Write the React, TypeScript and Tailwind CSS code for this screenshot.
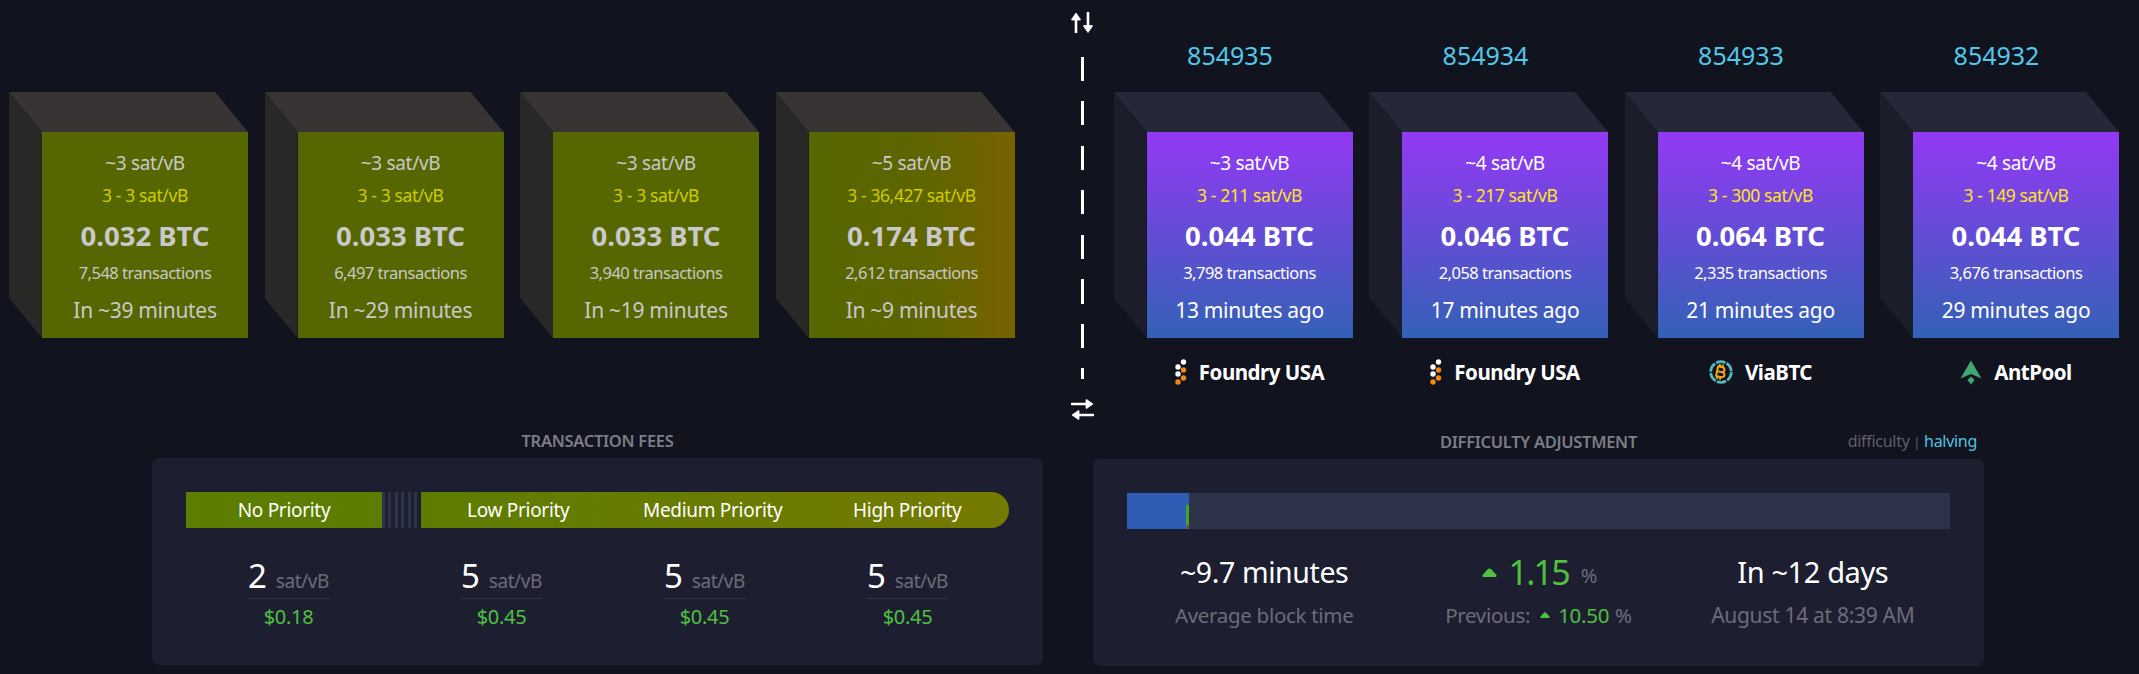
import { FaBitcoinSign } from 'react-icons/fa6';

type BlockData = {
    fee: string;
    range: string;
    btc: string;
    txs: string;
    time: string;
};

const pending: BlockData[] = [
    { fee: '~3 sat/vB', range: '3 - 3 sat/vB', btc: '0.032 BTC', txs: '7,548 transactions', time: 'In ~39 minutes' },
    { fee: '~3 sat/vB', range: '3 - 3 sat/vB', btc: '0.033 BTC', txs: '6,497 transactions', time: 'In ~29 minutes' },
    { fee: '~3 sat/vB', range: '3 - 3 sat/vB', btc: '0.033 BTC', txs: '3,940 transactions', time: 'In ~19 minutes' },
    { fee: '~5 sat/vB', range: '3 - 36,427 sat/vB', btc: '0.174 BTC', txs: '2,612 transactions', time: 'In ~9 minutes' },
];

const mined: (BlockData & { height: string; miner: 'foundry' | 'via' | 'ant' })[] = [
    { height: '854935', miner: 'foundry', fee: '~3 sat/vB', range: '3 - 211 sat/vB', btc: '0.044 BTC', txs: '3,798 transactions', time: '13 minutes ago' },
    { height: '854934', miner: 'foundry', fee: '~4 sat/vB', range: '3 - 217 sat/vB', btc: '0.046 BTC', txs: '2,058 transactions', time: '17 minutes ago' },
    { height: '854933', miner: 'via', fee: '~4 sat/vB', range: '3 - 300 sat/vB', btc: '0.064 BTC', txs: '2,335 transactions', time: '21 minutes ago' },
    { height: '854932', miner: 'ant', fee: '~4 sat/vB', range: '3 - 149 sat/vB', btc: '0.044 BTC', txs: '3,676 transactions', time: '29 minutes ago' },
];

function Cube({ data, front, top, side, text, yellow }: { data: BlockData; front: string; top: string; side: string; text: string; yellow: string }) {
    return (
        <div className="relative w-[239px] h-[246px] shrink-0">
            <div className={`absolute inset-0 [clip-path:polygon(0_0,206px_0,239px_40px,33px_40px)] ${top}`} />
            <div className={`absolute inset-0 [clip-path:polygon(0_0,33px_40px,33px_246px,0_206px)] ${side}`} />
            <div className={`absolute left-[33px] top-[40px] w-[206px] h-[206px] flex flex-col items-center whitespace-nowrap ${front} ${text}`}>
                <div className="mt-[19px] text-[19px] leading-[24px] tracking-[-0.3px]">{data.fee}</div>
                <div className={`mt-[8px] text-[17.5px] leading-[24px] tracking-[-0.4px] ${yellow}`}>{data.range}</div>
                <div className="mt-[13px] text-[27.5px] leading-[32px] font-bold">{data.btc}</div>
                <div className="mt-[9px] text-[16.5px] leading-[24px] tracking-[-0.5px]">{data.txs}</div>
                <div className="mt-[11px] text-[21px] leading-[28px] tracking-[-0.3px]">{data.time}</div>
            </div>
        </div>
    );
}

function FoundryIcon() {
    return (
        <svg width="12" height="26" viewBox="0 0 12 26" className="shrink-0">
            <circle cx="8.5" cy="3" r="2.7" fill="#fff" />
            <circle cx="3" cy="8" r="2.7" fill="#fff" />
            <circle cx="8.5" cy="11" r="2.7" fill="#f7860e" />
            <circle cx="3" cy="15" r="2.7" fill="#fff" />
            <circle cx="8.5" cy="19" r="2.7" fill="#f7860e" />
            <circle cx="3" cy="23" r="2.7" fill="#f7860e" />
        </svg>
    );
}

function ViaIcon() {
    return (
        <div className="grid place-items-center w-[24px] h-[24px] shrink-0">
            <svg width="24" height="24" viewBox="0 0 24 24" className="[grid-area:1/1]">
                <circle cx="12" cy="12" r="10.3" fill="none" stroke="#4fb9bd" strokeWidth="2.8" strokeDasharray="9.5 1.3" />
            </svg>
            <FaBitcoinSign className="[grid-area:1/1] text-[#f3a712] w-[16px] h-[16px] rotate-[12deg]" />
        </div>
    );
}

function AntIcon() {
    return (
        <svg width="22" height="25" viewBox="0 0 22 25" className="shrink-0">
            <path d="M11 0.5 L21.5 18.5 L11 14 L0.5 18.5 Z" fill="#3fa873" />
            <path d="M11 16.5 L14.5 20 L11 24.5 L7.5 20 Z" fill="#3fa873" />
        </svg>
    );
}

function Miner({ kind }: { kind: 'foundry' | 'via' | 'ant' }) {
    const label = kind === 'foundry' ? 'Foundry USA' : kind === 'via' ? 'ViaBTC' : 'AntPool';
    return (
        <div className="ml-[33px] w-[206px] mt-[22px] h-[24px] flex items-center justify-center gap-[12px] text-[20.5px] font-bold text-white tracking-[-0.5px] whitespace-nowrap">
            {kind === 'foundry' && <FoundryIcon />}
            {kind === 'via' && <ViaIcon />}
            {kind === 'ant' && <AntIcon />}
            <span>{label}</span>
        </div>
    );
}

function FeeValue({ value, usd, className }: { value: string; usd: string; className?: string }) {
    return (
        <div className={`w-[81px] flex flex-col items-stretch ${className || ''}`}>
            <div className="flex items-baseline justify-between border-b border-[#33344a] h-[43px] whitespace-nowrap">
                <span className="text-[33px] leading-[40px] text-white">{value}</span>
                <span className="text-[19px] text-[#6c6c78] tracking-[-0.4px]">sat/vB</span>
            </div>
            <div className="text-center text-[20px] leading-[36px] text-[#4fc13f] tracking-[-0.3px]">{usd}</div>
        </div>
    );
}

function Triangle({ w, h }: { w: number; h: number }) {
    return (
        <svg width={w} height={h} viewBox="0 0 15 9" className="shrink-0">
            <path d="M7.5 0.5 Q8.5 0.5 9.5 1.5 L14.5 7 Q15 9 13.5 9 L1.5 9 Q0 9 0.5 7 L5.5 1.5 Q6.5 0.5 7.5 0.5 Z" fill="#4fc13f" />
        </svg>
    );
}

export default function App() {
    return (
        <div className="w-full h-[674px] overflow-hidden bg-[#11131f] font-['Noto_Sans',sans-serif]">
            <div className="flex h-[430px]">
                <div className="flex gap-[16.5px] pl-[9px] pt-[92px]">
                    {pending.map((b, i) => (
                        <Cube
                            key={i}
                            data={b}
                            top="bg-[#383434]"
                            side="bg-[#292826]"
                            text="text-[#c9c9c9]"
                            yellow="text-[#cfcc00]"
                            front={i === 3
                                ? 'bg-[linear-gradient(to_right,#566600_0%,#5f6500_55%,#6b6400_80%,#756200_92%,#756200_100%)]'
                                : 'bg-[#566600]'}
                        />
                    ))}
                </div>

                <div className="ml-[56px] mr-[20px] w-[23px] shrink-0 flex flex-col items-center pt-[12px]">
                    <svg width="23" height="21" viewBox="0 0 23 21" className="shrink-0">
                        <path d="M5 21 V6" stroke="#fff" strokeWidth="2.6" strokeLinecap="round" />
                        <path d="M5 1 L9.5 7.5 Q9.5 8 9 8 L1 8 Q0.5 8 0.5 7.5 Z" fill="#fff" stroke="#fff" strokeWidth="0.8" strokeLinejoin="round" />
                        <path d="M17 0 V15" stroke="#fff" strokeWidth="2.6" strokeLinecap="round" />
                        <path d="M17 20.5 L12.5 14 Q12.5 13.5 13 13.5 L21 13.5 Q21.5 13.5 21.5 14 Z" fill="#fff" stroke="#fff" strokeWidth="0.8" strokeLinejoin="round" />
                    </svg>
                    <div className="mt-[24px] w-[3px] h-[322px] shrink-0 bg-[repeating-linear-gradient(to_bottom,#fff_0,#fff_24px,transparent_24px,transparent_44.5px)]" />
                    <svg width="23" height="21" viewBox="0 0 23 21" className="mt-[20px] shrink-0">
                        <path d="M1 5 H17" stroke="#fff" strokeWidth="2.6" strokeLinecap="round" />
                        <path d="M22 5 L15.5 0.5 Q15 0.5 15 1 L15 9 Q15 9.5 15.5 9.5 Z" fill="#fff" stroke="#fff" strokeWidth="0.8" strokeLinejoin="round" />
                        <path d="M22 16 H6" stroke="#fff" strokeWidth="2.6" strokeLinecap="round" />
                        <path d="M1 16 L7.5 11.5 Q8 11.5 8 12 L8 20 Q8 20.5 7.5 20.5 Z" fill="#fff" stroke="#fff" strokeWidth="0.8" strokeLinejoin="round" />
                    </svg>
                </div>

                <div className="flex gap-[16.5px]">
                    {mined.map((b) => (
                        <div key={b.height} className="w-[239px] shrink-0">
                            <div className="h-[92px] pt-[40px] pr-[6px] text-center text-[25px] leading-[30px] text-[#53c8e8]">{b.height}</div>
                            <Cube
                                data={b}
                                top="bg-[#252837]"
                                side="bg-[#1b1d2a]"
                                text="text-white"
                                yellow="text-[#ffe61e]"
                                front="bg-[linear-gradient(to_bottom,#9339f4,#3361b6)]"
                            />
                            <Miner kind={b.miner} />
                        </div>
                    ))}
                </div>
            </div>

            <div className="flex gap-[50px] pl-[152px]">
                <section className="w-[891px]">
                    <h2 className="mb-[6px] text-center text-[16.5px] leading-[22px] font-semibold text-[#7d7d87] tracking-[-0.3px]">TRANSACTION FEES</h2>
                    <div className="h-[207px] rounded-[7px] bg-[#1d1f31] px-[34px] pt-[34px]">
                        <div className="flex h-[36px] text-[19px] leading-[36px] text-white text-center tracking-[-0.3px]">
                            <div className="w-[196px] bg-[#5d7d01]">No Priority</div>
                            <div className="w-[39px] bg-[repeating-linear-gradient(to_right,#2d3348_0,#2d3348_3px,transparent_3px,transparent_6.5px)]" />
                            <div className="w-[588px] pr-[4.5px] grid grid-cols-3 rounded-r-[18px] bg-[linear-gradient(to_right,#5d7d01,#757a00)]">
                                <div>Low Priority</div>
                                <div>Medium Priority</div>
                                <div>High Priority</div>
                            </div>
                        </div>
                        <div className="flex gap-[122px] pl-[62px] pt-[28px]">
                            <FeeValue value="2" usd="$0.18" className="mr-[10px]" />
                            <FeeValue value="5" usd="$0.45" />
                            <FeeValue value="5" usd="$0.45" />
                            <FeeValue value="5" usd="$0.45" />
                        </div>
                    </div>
                </section>

                <section className="w-[891px]">
                    <div className="mb-[6px] grid grid-cols-[1fr_auto_1fr] items-center">
                        <div />
                        <h2 className="text-center text-[16.5px] leading-[22px] font-semibold text-[#7d7d87] tracking-[-0.3px]">DIFFICULTY ADJUSTMENT</h2>
                        <div className="justify-self-end pr-[7px] text-[16px] leading-[22px] tracking-[-0.3px] text-[#5f5f6b]">
                            difficulty <span className="text-[13px]">|</span> <span className="text-[#4fc3e3]">halving</span>
                        </div>
                    </div>
                    <div className="h-[207px] rounded-[7px] bg-[#1d1f31] px-[34px] pt-[34px]">
                        <div className="flex h-[36px] bg-[#2d3348]">
                            <div className="w-[59px] bg-[#2f5cb5]" />
                            <div className="w-[3px] flex flex-col">
                                <div className="h-[12px] bg-[#2f5cb5]" />
                                <div className="h-[20px] bg-[#3da81f]" />
                                <div className="h-[4px] bg-[#5c5c6b]" />
                            </div>
                        </div>
                        <div className="grid grid-cols-3 pt-[23px] text-center whitespace-nowrap">
                            <div>
                                <div className="h-[40px] text-[28.5px] leading-[40px] text-white tracking-[-0.4px]">~9.7 minutes</div>
                                <div className="mt-[9px] text-[20.5px] leading-[28px] text-[#6c6c78] tracking-[-0.3px]">Average block time</div>
                            </div>
                            <div>
                                <div className="h-[40px] flex items-center justify-center pl-[2px]">
                                    <Triangle w={15} h={9} />
                                    <span className="ml-[12px] text-[34px] leading-[40px] text-[#4fc13f] tracking-[-1.8px]">1.15</span>
                                    <span className="ml-[12px] mt-[8px] text-[20px] leading-[28px] text-[#6c6c78]">%</span>
                                </div>
                                <div className="mt-[9px] h-[28px] flex items-center justify-center text-[20.5px] leading-[28px] text-[#6c6c78] tracking-[-0.3px]">
                                    <span>Previous:</span>
                                    <span className="ml-[10px] mr-[8px]"><Triangle w={10} h={6} /></span>
                                    <span className="text-[#4fc13f]">10.50</span>
                                    <span className="ml-[6px]">%</span>
                                </div>
                            </div>
                            <div>
                                <div className="h-[40px] text-[29px] leading-[40px] text-white tracking-[-0.4px]">In ~12 days</div>
                                <div className="mt-[9px] text-[21px] leading-[28px] text-[#6c6c78] tracking-[-0.3px]">August 14 at 8:39 AM</div>
                            </div>
                        </div>
                    </div>
                </section>
            </div>
        </div>
    );
}
